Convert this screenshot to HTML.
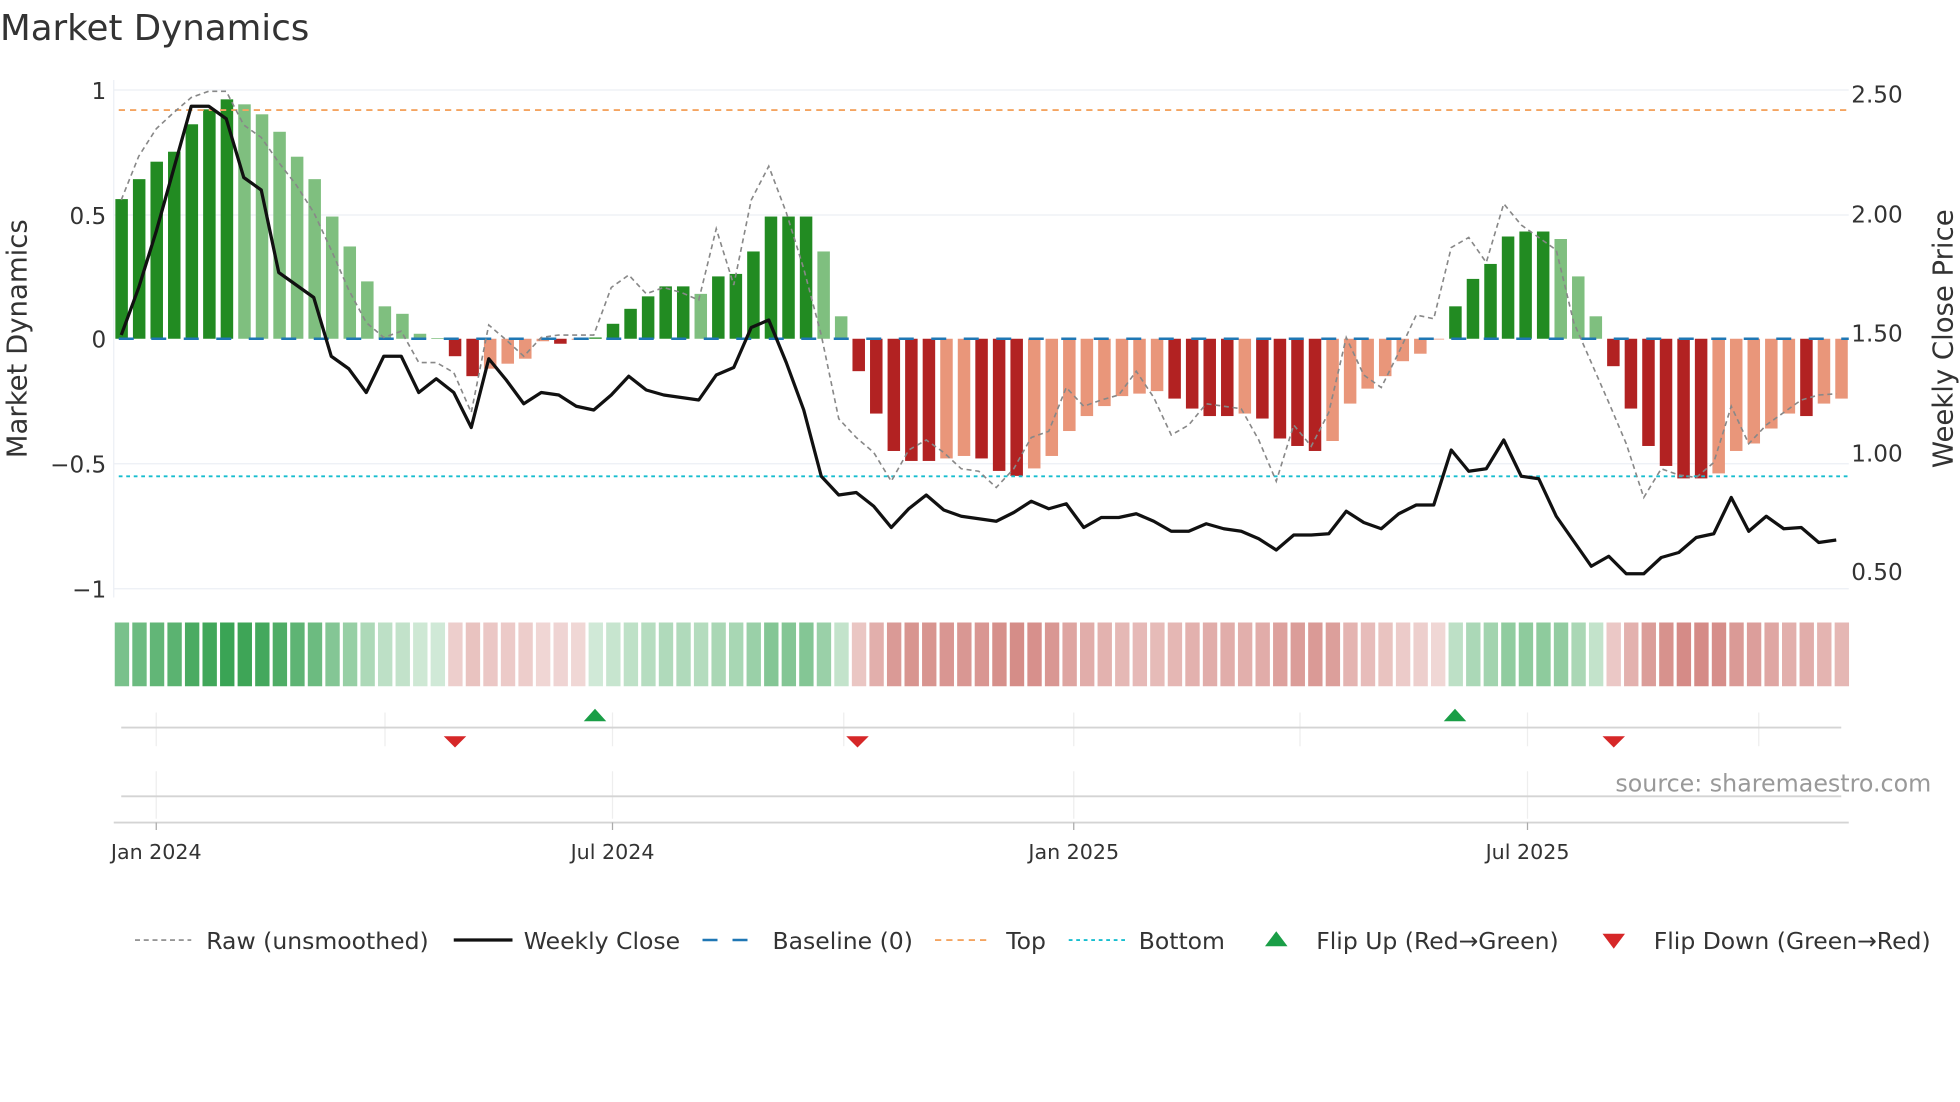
<!DOCTYPE html>
<html><head><meta charset="utf-8"><style>
html,body{margin:0;padding:0;background:#fff;width:1960px;height:1102px;overflow:hidden}
svg{display:block}
text{font-family:"DejaVu Sans","Liberation Sans",sans-serif;fill:#333}
</style></head><body>
<svg id="s" width="1960" height="1102" viewBox="0 0 1568 881.6" xmlns="http://www.w3.org/2000/svg">
<text x="0" y="32" font-size="28.5">Market Dynamics</text>
<g stroke="#eceff4" stroke-width="1">
<line x1="91" y1="72" x2="1479" y2="72"/><line x1="91" y1="172" x2="1479" y2="172"/>
<line x1="91" y1="371" x2="1479" y2="371"/><line x1="91" y1="471" x2="1479" y2="471"/>
<line x1="91" y1="64" x2="91" y2="478"/>
</g>
<g font-size="18.5" text-anchor="end">
<text x="85" y="79">1</text><text x="85" y="179">0.5</text><text x="85" y="278">0</text>
<text x="85" y="378">−0.5</text><text x="85" y="478">−1</text>
</g>
<g font-size="18.5">
<text x="1481" y="82">2.50</text><text x="1481" y="178">2.00</text><text x="1481" y="273">1.50</text>
<text x="1481" y="369">1.00</text><text x="1481" y="464">0.50</text>
</g>
<text transform="translate(21,271) rotate(-90)" font-size="22" text-anchor="middle">Market Dynamics</text>
<text transform="translate(1562,271) rotate(-90)" font-size="22" text-anchor="middle">Weekly Close Price</text>
<g id="bars"></g>
<line x1="95" y1="271" x2="1479" y2="271" stroke="#1f77b4" stroke-width="2" stroke-dasharray="12,14"/>
<line x1="95" y1="88" x2="1479" y2="88" stroke="#f4a460" stroke-width="1.5" stroke-dasharray="5,4"/>
<line x1="95" y1="381" x2="1479" y2="381" stroke="#17becf" stroke-width="1.5" stroke-dasharray="3,3"/>
<polyline id="raw" fill="none" stroke="#888" stroke-width="1.3" stroke-dasharray="4,3"/>
<polyline id="close" fill="none" stroke="#111" stroke-width="2.6" stroke-linejoin="round"/>
<g id="heat"></g>
<g stroke="#eee" stroke-width="1">
<line x1="125" y1="570" x2="125" y2="597"/><line x1="308" y1="570" x2="308" y2="597"/><line x1="490" y1="570" x2="490" y2="597"/><line x1="675" y1="570" x2="675" y2="597"/><line x1="859" y1="570" x2="859" y2="597"/><line x1="1040" y1="570" x2="1040" y2="597"/><line x1="1222" y1="570" x2="1222" y2="597"/><line x1="1407" y1="570" x2="1407" y2="597"/>
<line x1="125" y1="617" x2="125" y2="655"/><line x1="490" y1="617" x2="490" y2="655"/><line x1="859" y1="617" x2="859" y2="655"/><line x1="1222" y1="617" x2="1222" y2="655"/>
</g>
<line x1="97" y1="582" x2="1473" y2="582" stroke="#d4d4d4" stroke-width="1.5"/>
<line x1="97" y1="637" x2="1473" y2="637" stroke="#d4d4d4" stroke-width="1.5"/>
<line x1="91" y1="658" x2="1479" y2="658" stroke="#d4d4d4" stroke-width="1.5"/>
<g fill="#1a9e47"><polygon points="467,577 485,577 476,567"/><polygon points="1155,577 1173,577 1164,567"/></g>
<g fill="#d62728"><polygon points="355,589 373,589 364,598"/><polygon points="677,589 695,589 686,598"/><polygon points="1282,589 1300,589 1291,598"/></g>
<text x="1545" y="633" font-size="19" text-anchor="end" style="fill:#999">source: sharemaestro.com</text>
<g stroke="#aaa" stroke-width="1"><line x1="125" y1="658" x2="125" y2="664"/><line x1="490" y1="658" x2="490" y2="664"/><line x1="859" y1="658" x2="859" y2="664"/><line x1="1222" y1="658" x2="1222" y2="664"/></g>
<g font-size="16.5" text-anchor="middle">
<text x="125" y="687">Jan 2024</text><text x="490" y="687">Jul 2024</text><text x="859" y="687">Jan 2025</text><text x="1222" y="687">Jul 2025</text>
</g>
<g font-size="18.8">
<line x1="108" y1="752" x2="153" y2="752" stroke="#888" stroke-width="1.3" stroke-dasharray="4,3"/>
<text x="165" y="759">Raw (unsmoothed)</text>
<line x1="363" y1="752" x2="410" y2="752" stroke="#111" stroke-width="2.6"/>
<text x="419" y="759">Weekly Close</text>
<line x1="562" y1="752" x2="606" y2="752" stroke="#1f77b4" stroke-width="2" stroke-dasharray="12,12"/>
<text x="618" y="759">Baseline (0)</text>
<line x1="748" y1="752" x2="793" y2="752" stroke="#f4a460" stroke-width="1.5" stroke-dasharray="5,4"/>
<text x="805" y="759">Top</text>
<line x1="855" y1="752" x2="900" y2="752" stroke="#17becf" stroke-width="1.5" stroke-dasharray="3,3"/>
<text x="911" y="759">Bottom</text>
<polygon points="1012,757 1030,757 1021,745" fill="#1a9e47"/>
<text x="1053" y="759">Flip Up (Red→Green)</text>
<polygon points="1282,747 1300,747 1291,759" fill="#d62728"/>
<text x="1323" y="759">Flip Down (Green→Red)</text>
</g>
</svg>
<script>
var v=[0.56,0.64,0.71,0.75,0.86,0.92,0.96,0.94,0.90,0.83,0.73,0.64,0.49,0.37,0.23,0.13,0.10,0.02,0.003,-0.07,-0.15,-0.12,-0.10,-0.08,-0.01,-0.02,-0.004,0.005,0.06,0.12,0.17,0.21,0.21,0.18,0.25,0.26,0.35,0.49,0.49,0.49,0.35,0.09,-0.13,-0.30,-0.45,-0.49,-0.49,-0.48,-0.47,-0.48,-0.53,-0.55,-0.52,-0.47,-0.37,-0.31,-0.27,-0.23,-0.22,-0.21,-0.24,-0.28,-0.31,-0.31,-0.30,-0.32,-0.40,-0.43,-0.45,-0.41,-0.26,-0.20,-0.15,-0.09,-0.06,-0.003,0.13,0.24,0.30,0.41,0.43,0.43,0.40,0.25,0.09,-0.11,-0.28,-0.43,-0.51,-0.56,-0.56,-0.54,-0.45,-0.42,-0.36,-0.30,-0.31,-0.26,-0.24];
var ns="http://www.w3.org/2000/svg",b=document.getElementById('bars'),h=document.getElementById('heat');
function rect(g,x,y,w,hh,f,o){var r=document.createElementNS(ns,'rect');r.setAttribute('x',x);r.setAttribute('y',y);r.setAttribute('width',w);r.setAttribute('height',hh);r.setAttribute('fill',f);if(o!=null)r.setAttribute('fill-opacity',o);g.appendChild(r);}
for(var i=0;i<v.length;i++){var x=92.3+i*14.04,a=v[i],p=i?v[i-1]:0;
var rising=Math.abs(a)>=Math.abs(p);var col;
if(a>=0)col=rising?'#228b22':'#7fbf7f';else col=rising?'#b22222':'#e9967a';
var y0=271,y1=271-a*199.5;rect(b,x,Math.min(y0,y1),10,Math.abs(y1-y0),col);
var hc=a>=0?'#2e9e4a':'#bd4a43';rect(h,x-0.5,498,11.5,51,hc,0.22+0.75*Math.abs(a));}
var cl="97,268 111,230 125,185 139,135 153,85 167,85 181,95 195,142 209,152 223,218 237,228 251,238 265,285 279,295 293,314 307,285 321,285 335,314 349,303 363,314 377,342 391,287 405,304 419,323 433,314 447,316 461,325 475,328 489,316 503,301 517,312 531,316 545,318 559,320 573,300 587,294 601,262 615,256 629,290 643,328 657,381 671,396 685,394 699,405 713,422 727,407 741,396 755,408 769,413 783,415 797,417 811,410 825,401 839,407 853,403 867,422 881,414 895,414 909,411 923,417 937,425 951,425 965,419 979,423 993,425 1007,431 1021,440 1035,428 1049,428 1063,427 1077,409 1091,418 1105,423 1119,411 1133,404 1147,404 1161,360 1175,377 1189,375 1203,352 1217,381 1231,383 1245,413 1259,433 1273,453 1287,445 1301,459 1315,459 1329,446 1343,442 1357,430 1371,427 1385,398 1399,425 1413,413 1427,423 1441,422 1455,434 1469,432";
var rw="97,160 111,125 125,103 139,90 153,78 167,73 181,73 195,100 209,110 223,130 237,148 251,170 265,200 279,232 293,258 307,270 321,265 335,290 349,290 363,298 377,330 391,260 405,272 419,285 433,270 447,268 461,268 475,268 489,230 503,220 517,235 531,230 545,234 559,240 573,183 587,228 601,160 615,133 629,170 643,215 657,268 671,335 685,350 699,362 713,385 727,360 741,352 755,362 769,375 783,377 797,390 811,375 825,350 839,345 853,310 867,325 881,320 895,316 909,297 923,318 937,348 951,340 965,323 979,325 993,327 1007,352 1021,385 1035,340 1049,357 1063,330 1077,270 1091,300 1105,310 1119,282 1133,252 1147,255 1161,198 1175,190 1189,210 1203,163 1217,180 1231,190 1245,200 1259,258 1273,290 1287,322 1301,355 1315,398 1329,375 1343,380 1357,382 1371,370 1385,325 1399,355 1413,340 1427,330 1441,320 1455,316 1469,315";
document.getElementById('close').setAttribute('points',cl);
document.getElementById('raw').setAttribute('points',rw);
</script>
</body></html>
